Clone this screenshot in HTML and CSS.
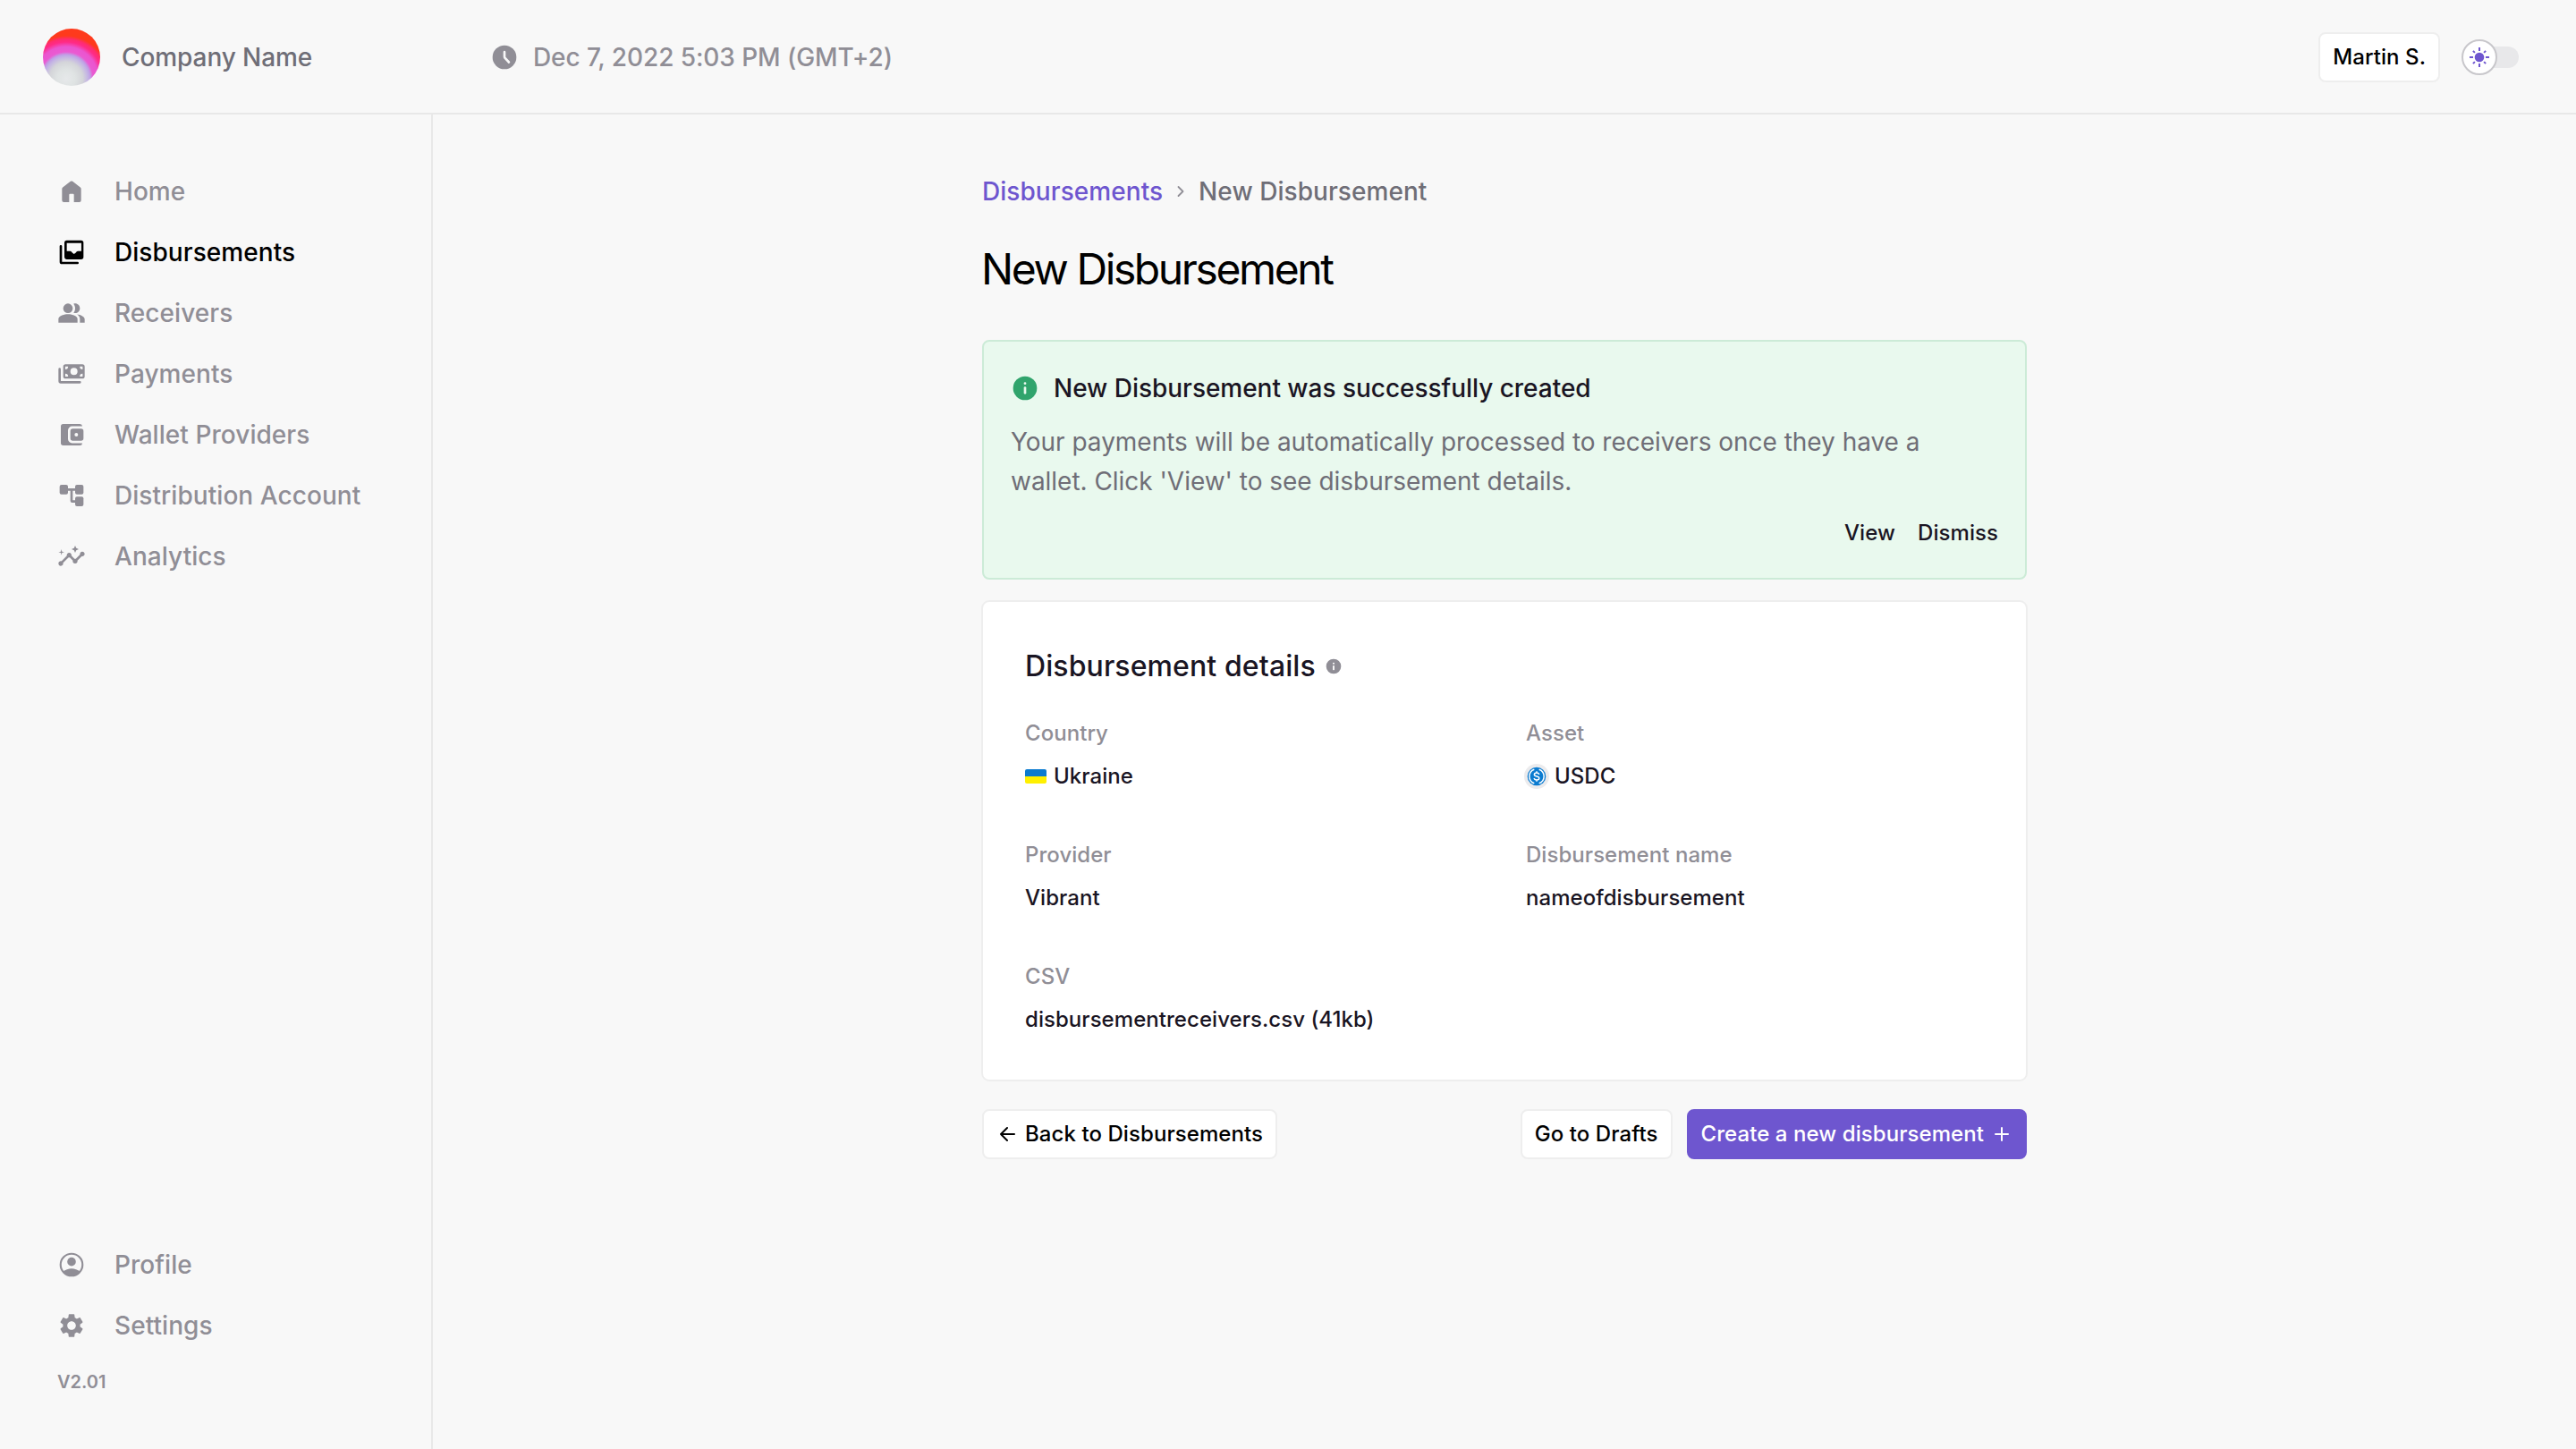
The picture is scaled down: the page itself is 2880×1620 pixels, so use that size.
FILE: index.html
```html
<!DOCTYPE html>
<html lang="en">
<head>
<meta charset="utf-8">
<title>New Disbursement</title>
<link rel="stylesheet" href="styles.css">
</head>
<body>
<div class="app">
  <header class="topbar">
    <div class="brand">
      <span class="brand-mark"></span>
      <span class="brand-name">Company Name</span>
    </div>
    <div class="clock">
      <svg class="icon" viewBox="0 0 24 24"><circle cx="12" cy="12" r="10"/><path class="clock-hands" d="M12 7.6v3.9c0 .4.1.7.3 1l3.4 3.6"/></svg>
      <span>Dec 7, 2022 5:03 PM (GMT+2)</span>
    </div>
    <div class="account">
      <button class="button button-plain" type="button">Martin S.</button>
      <div class="theme-toggle">
        <span class="theme-knob">
          <svg class="sun" viewBox="0 0 24 24"><circle cx="12" cy="12" r="5.3"/><path d="M12 1v4M12 19v4M1 12h4M19 12h4M4.9 4.9l2 2M17.1 17.1l2 2M4.9 19.1l2-2M17.1 6.9l2-2"/></svg>
        </span>
      </div>
    </div>
  </header>

  <div class="body">
    <aside class="sidebar">
      <nav class="nav">
        <a class="nav-item"><svg class="icon" viewBox="0 0 24 24"><path d="M5.5 21A1.5 1.5 0 0 1 4 19.5V9.75c0-.47.22-.92.6-1.2l6.5-4.9c.53-.4 1.27-.4 1.8 0l6.5 4.9c.38.28.6.73.6 1.2v9.75a1.5 1.5 0 0 1-1.5 1.5H14v-6.25a.75.75 0 0 0-.75-.75h-2.5a.75.75 0 0 0-.75.75V21z"/></svg>Home</a>
        <a class="nav-item active"><svg class="icon" viewBox="0 0 24 24"><path fill-rule="evenodd" d="M20 2H8a2 2 0 0 0-2 2v12c0 1.1.9 2 2 2h12a2 2 0 0 0 2-2V4a2 2 0 0 0-2-2zM8 4.3h12.2V11h-2.9c-.4 0-.8.2-1 .5-.5.8-1.2 1.3-2.2 2-1-.7-1.800-1.200-2.300-2a1.200 1.200 0 0 0-1-.5H8z"/><path d="M2 7a1 1 0 0 1 2 0v13h13a1 1 0 0 1 0 2H4a2 2 0 0 1-2-2z"/></svg>Disbursements</a>
        <a class="nav-item"><svg class="icon" viewBox="0 0 24 24"><path d="M16.670 13.130C18.040 14.060 19 15.320 19 17v3h4v-3c0-2.180-3.570-3.470-6.330-3.870z"/><path d="M15 12c2.210 0 4-1.790 4-4s-1.790-4-4-4c-.470 0-.910.100-1.330.240C14.500 5.270 15 6.580 15 8s-.500 2.730-1.330 3.760c.420.140.860.240 1.330.240z"/><circle cx="9" cy="8" r="4"/><path d="M9 13c-2.670 0-8 1.340-8 4v3h16v-3c0-2.660-5.330-4-8-4z"/></svg>Receivers</a>
        <a class="nav-item"><svg class="icon" viewBox="0 0 24 24"><path fill-rule="evenodd" d="M7 4h14a2 2 0 0 1 2 2v8a2 2 0 0 1-2 2H7a2 2 0 0 1-2-2V6a2 2 0 0 1 2-2zM14 7a3 3 0 1 0 0 6 3 3 0 0 0 0-6zM6.700 5.800v2.400a2.400 2.400 0 0 0 2.400-2.400zM21.300 5.800v2.400a2.400 2.400 0 0 1-2.400-2.400zM6.700 14.200v-2.400a2.400 2.400 0 0 1 2.400 2.400zM21.300 14.200v-2.400a2.400 2.400 0 0 0-2.400 2.400z"/><path d="M1 8a1 1 0 0 1 2 0v10h16a1 1 0 0 1 0 2H3a2 2 0 0 1-2-2z"/></svg>Payments</a>
        <a class="nav-item"><svg class="icon" viewBox="0 0 24 24"><path d="M21 4.900A2 2 0 0 0 19 3H5a2 2 0 0 0-2 2v14a2 2 0 0 0 2 2h14a2 2 0 0 0 2-1.900h-8.500A3.500 3.500 0 0 1 9 15.600V8.400a3.500 3.500 0 0 1 3.500-3.500z"/><path fill-rule="evenodd" d="M13 7h7a2 2 0 0 1 2 2v6a2 2 0 0 1-2 2h-7a2 2 0 0 1-2-2V9a2 2 0 0 1 2-2zM16 10.500a1.500 1.500 0 1 0 0 3 1.500 1.500 0 0 0 0-3z"/></svg>Wallet Providers</a>
        <a class="nav-item"><svg class="icon" viewBox="0 0 24 24"><rect x="2" y="3" width="7" height="8" rx="1.500"/><rect x="15" y="3" width="7" height="8" rx="1.500"/><rect x="15" y="13" width="7" height="8" rx="1.500"/><path d="M8 6h8v2h-3v7.500a.500.500 0 0 0 .500.500H16v2h-3.500a1.500 1.500 0 0 1-1.500-1.500V8H8z"/></svg>Distribution Account</a>
        <a class="nav-item"><svg class="icon" viewBox="0 0 24 24"><path d="M21 8c-1.450 0-2.260 1.440-1.930 2.510l-3.550 3.560c-.300-.090-.740-.090-1.040 0l-2.550-2.550C12.270 10.450 11.460 9 10 9c-1.450 0-2.270 1.440-1.930 2.520l-4.560 4.550C2.440 15.740 1 16.550 1 18c0 1.100.900 2 2 2 1.450 0 2.260-1.440 1.930-2.510l4.550-4.560c.300.090.740.090 1.040 0l2.550 2.550C12.730 16.550 13.540 18 15 18c1.450 0 2.270-1.440 1.930-2.520l3.560-3.550C21.560 12.260 23 11.450 23 10c0-1.100-.900-2-2-2z"/><path d="m15 9 .940-2.070L18 6l-2.060-.930L15 3l-.920 2.070L12 6l2.080.930zM3.500 11 4 9l2-.500L4 8l-.500-2L3 8l-2 .500L3 9z"/></svg>Analytics</a>
      </nav>
      <div class="sidebar-footer">
        <nav class="nav">
          <a class="nav-item"><svg class="icon" viewBox="0 0 24 24"><circle class="ring" cx="12" cy="12" r="9.200"/><circle cx="12" cy="9.500" r="3.600"/><path d="M4.900 17.900C6.900 16.200 9.400 15.200 12 15.200s5.100 1 7.100 2.700A9.500 9.500 0 0 1 12 21.500a9.500 9.500 0 0 1-7.100-3.600z"/></svg>Profile</a>
          <a class="nav-item"><svg class="icon" viewBox="0 0 24 24"><path d="M19.140 12.940c.040-.300.060-.610.060-.940 0-.320-.020-.640-.070-.940l2.030-1.580c.180-.140.230-.410.120-.610l-1.920-3.320c-.120-.220-.370-.290-.590-.220l-2.390.960c-.500-.380-1.030-.700-1.620-.940l-.360-2.540c-.040-.240-.240-.410-.480-.410h-3.840c-.240 0-.430.170-.470.410l-.360 2.540c-.590.240-1.130.570-1.620.940l-2.390-.960c-.220-.080-.470 0-.590.220L2.740 8.870c-.120.210-.080.470.120.610l2.030 1.580c-.050.300-.090.630-.090.940s.020.640.070.940l-2.030 1.580c-.180.140-.230.410-.120.610l1.920 3.320c.120.220.370.290.590.220l2.390-.960c.500.380 1.030.700 1.620.940l.360 2.540c.050.240.240.410.480.410h3.840c.240 0 .440-.170.470-.410l.360-2.540c.590-.240 1.130-.560 1.620-.940l2.390.960c.220.080.470 0 .590-.220l1.920-3.320c.120-.220.070-.470-.120-.610l-2.010-1.580zM12 15.600c-1.980 0-3.600-1.620-3.600-3.600s1.620-3.600 3.600-3.600 3.600 1.620 3.600 3.600-1.620 3.600-3.600 3.600z"/></svg>Settings</a>
        </nav>
        <div class="version">V2.01</div>
      </div>
    </aside>

    <main class="main">
      <div class="content">
        <div class="breadcrumb">
          <a class="breadcrumb-link">Disbursements</a>
          <svg class="chevron" viewBox="0 0 16 16"><path d="M5.500 3l5 5-5 5"/></svg>
          <span>New Disbursement</span>
        </div>
        <h1 class="title">New Disbursement</h1>

        <section class="notice">
          <div class="notice-title">
            <svg class="icon notice-icon" viewBox="0 0 24 24"><circle cx="12" cy="12" r="10"/><circle class="knockout" cx="12" cy="8" r="1.050"/><rect class="knockout" x="11" y="10.700" width="2" height="6.300" rx="1"/></svg>
            New Disbursement was successfully created
          </div>
          <p class="notice-text">Your payments will be automatically processed to receivers once they have a wallet. Click 'View' to see disbursement details.</p>
          <div class="notice-actions"><a>View</a><a>Dismiss</a></div>
        </section>

        <section class="card">
          <h2 class="card-title">Disbursement details
            <svg class="info" viewBox="0 0 24 24"><circle cx="12" cy="12" r="10"/><circle class="knockout" cx="12" cy="8" r="1.200"/><rect class="knockout" x="10.900" y="10.800" width="2.200" height="6.200" rx=".8"/></svg>
          </h2>
          <dl class="details">
            <div class="detail"><dt>Country</dt><dd><span class="flag"></span>Ukraine</dd></div>
            <div class="detail"><dt>Asset</dt><dd>
              <svg class="coin" viewBox="0 0 28 28"><circle class="coin-rim" cx="14" cy="14" r="14"/><circle class="coin-face" cx="14" cy="14" r="10.300"/><path class="coin-line" d="M11.300 6.200a8.300 8.300 0 0 0 0 15.600M16.700 6.200a8.300 8.300 0 0 1 0 15.600"/><path class="coin-line" d="M14 8.300v1.700M14 18v1.700M16.700 12c-.2-1.200-1.200-1.900-2.700-1.900s-2.600.7-2.600 1.900c0 2.700 5.400 1.200 5.400 4 0 1.200-1.100 2-2.700 2s-2.700-.7-2.900-2"/></svg>
              USDC</dd></div>
            <div class="detail"><dt>Provider</dt><dd>Vibrant</dd></div>
            <div class="detail"><dt>Disbursement name</dt><dd>nameofdisbursement</dd></div>
            <div class="detail"><dt>CSV</dt><dd>disbursementreceivers.csv (41kb)</dd></div>
          </dl>
        </section>

        <div class="actions">
          <button class="button button-plain" type="button"><svg class="button-icon" viewBox="0 0 24 24"><path d="M20 12H5M12 5l-7 7 7 7"/></svg>Back to Disbursements</button>
          <div class="actions-end">
            <button class="button button-plain" type="button">Go to Drafts</button>
            <button class="button button-primary" type="button">Create a new disbursement<svg class="button-icon" viewBox="0 0 24 24"><path d="M12 5v14M5 12h14"/></svg></button>
          </div>
        </div>
      </div>
    </main>
  </div>
</div>
</body>
</html>
```
FILE: styles.css
```css
* {
  box-sizing: border-box;
}

body {
  margin: 0;
  background: #f8f8f8;
  color: #1a1523;
  font-family: Inter, "Liberation Sans", sans-serif;
  font-size: 28px;
  font-weight: 500;
  line-height: 44px;
}

h1, h2, p, dl, dt, dd {
  margin: 0;
}

.app {
  height: 100vh;
  display: flex;
  flex-direction: column;
}

.icon {
  flex: none;
  width: 32px;
  height: 32px;
  fill: currentColor;
}

/* Top bar */
.topbar {
  flex: none;
  display: flex;
  align-items: center;
  height: 128px;
  padding: 2px 64px 0 48px;
  border-bottom: 2px solid #e8e8e8;
}

.brand {
  display: flex;
  align-items: center;
  gap: 24px;
  width: 500px;
  color: #6f6e77;
  letter-spacing: -0.003em;
}

.brand-mark {
  width: 64px;
  height: 64px;
  border-radius: 50%;
  background: radial-gradient(circle 64px at 26px 56px, #e6e8ea 0, #dfe3e3 16%, #d4d5d9 29%, #c4b4e4 38%, #bfa0e6 42%, #ea5ad2 47%, #ea55cf 56%, #ff2b86 64%, #ff2c70 69%, #fe3a1c 75%);
}

.clock {
  display: flex;
  align-items: center;
  gap: 16px;
  color: #908e96;
  letter-spacing: -0.003em;
}

.clock-hands {
  fill: none;
  stroke: #f8f8f8;
  stroke-width: 2;
  stroke-linecap: round;
  stroke-linejoin: round;
}

.account {
  display: flex;
  align-items: center;
  gap: 24px;
  margin-left: auto;
}

.theme-toggle {
  display: flex;
  align-items: center;
  width: 64px;
  height: 24px;
  border-radius: 12px;
  background: linear-gradient(90deg, transparent 20px, #e8e8ea 20px);
}

.theme-knob {
  display: flex;
  align-items: center;
  justify-content: center;
  width: 40px;
  height: 40px;
  border: 2px solid #c8c7cb;
  border-radius: 50%;
  background: #fff;
}

.sun {
  flex: none;
  width: 24px;
  height: 24px;
  fill: #6e56cf;
  stroke: #6e56cf;
}

.sun circle {
  stroke: none;
}

.sun path {
  stroke-width: 2;
}

/* Sidebar */
.body {
  flex: 1;
  display: flex;
  min-height: 0;
}

.sidebar {
  flex: none;
  display: flex;
  flex-direction: column;
  justify-content: space-between;
  width: 484px;
  padding: 52px 0 53px 64px;
  border-right: 2px solid #e8e8e8;
  color: #908e96;
}

.nav-item {
  display: flex;
  align-items: center;
  gap: 32px;
  height: 68px;
  letter-spacing: 0.002em;
}

.nav-item.active {
  color: #000;
}

.ring {
  fill: none;
  stroke: currentColor;
  stroke-width: 1.6;
}

.version {
  margin-top: 7px;
  font-size: 20px;
  font-weight: 600;
}

/* Page */
.main {
  flex: 1;
  display: flex;
  justify-content: center;
  padding-top: 64px;
}

.content {
  width: 1168px;
}

.breadcrumb {
  display: flex;
  align-items: center;
  gap: 12px;
  color: #6f6e77;
  letter-spacing: 0.002em;
}

.breadcrumb-link {
  color: #6e56cf;
}

.chevron {
  width: 16px;
  height: 16px;
  fill: none;
  stroke: #908e96;
  stroke-width: 1.8;
  stroke-linecap: round;
  stroke-linejoin: round;
}

.title {
  margin: 33px 0 47px -1px;
  color: #000;
  font-size: 48px;
  font-weight: 400;
  line-height: 64px;
  letter-spacing: -0.05em;
}

.notice {
  display: flex;
  flex-direction: column;
  gap: 16px;
  height: 268px;
  padding: 30px;
  border: 2px solid #ccebd7;
  border-radius: 8px;
  background: #e9f9ee;
}

.notice-title {
  display: flex;
  align-items: center;
  gap: 16px;
  letter-spacing: -0.001em;
}

.notice-icon {
  fill: #30a46c;
}

.notice-icon .knockout {
  fill: #e9f9ee;
}

.notice-text {
  max-width: 1040px;
  color: #6f6e77;
  font-weight: 400;
  letter-spacing: -0.001em;
}

.notice-actions {
  display: flex;
  justify-content: flex-end;
  gap: 25px;
  font-size: 24px;
  line-height: 40px;
  letter-spacing: 0.003em;
}

.card {
  margin: 23px -1px 31px;
  padding: 47px;
  border: 2px solid #eee;
  border-radius: 9px;
  background: #fff;
}

.card-title {
  display: flex;
  align-items: center;
  gap: 10px;
  padding-top: 1px;
  margin-bottom: 31px;
  font-size: 32px;
  font-weight: 500;
  line-height: 48px;
  letter-spacing: 0.003em;
}

.info {
  width: 20px;
  height: 20px;
  fill: #908e96;
}

.info .knockout {
  fill: #fff;
}

.details {
  display: grid;
  grid-template-columns: 1fr 1fr;
  gap: 48px;
  font-size: 24px;
  line-height: 40px;
  letter-spacing: 0.002em;
}

.detail {
  display: flex;
  flex-direction: column;
  gap: 8px;
}

.detail dt {
  color: #908e96;
}

.detail dd {
  display: flex;
  align-items: center;
  gap: 8px;
}

.flag {
  width: 24px;
  height: 16px;
  border-radius: 2px;
  background: linear-gradient(#0b7bd0 50%, #fff000 50%);
}

.coin {
  width: 28px;
  height: 28px;
  margin: 0 -2px;
}

.coin-rim {
  fill: #ebebed;
}

.coin-face {
  fill: #0b7bd0;
}

.coin-line {
  fill: none;
  stroke: #fff;
  stroke-width: 1.5;
}

/* Buttons */
.actions,
.actions-end {
  display: flex;
  gap: 16px;
}

.actions {
  justify-content: space-between;
}

.button {
  display: flex;
  align-items: center;
  gap: 8px;
  height: 56px;
  padding: 0 14px;
  border: 2px solid #eee;
  border-radius: 8px;
  font: inherit;
  font-size: 24px;
  line-height: 40px;
  letter-spacing: 0.003em;
}

.button-plain {
  background: #fff;
  color: #000;
}

.button-primary {
  border-color: #6e56cf;
  background: #6e56cf;
  color: #fff;
}

.button-icon {
  width: 24px;
  height: 24px;
  fill: none;
  stroke: currentColor;
  stroke-width: 2;
  stroke-linecap: round;
  stroke-linejoin: round;
}
```
